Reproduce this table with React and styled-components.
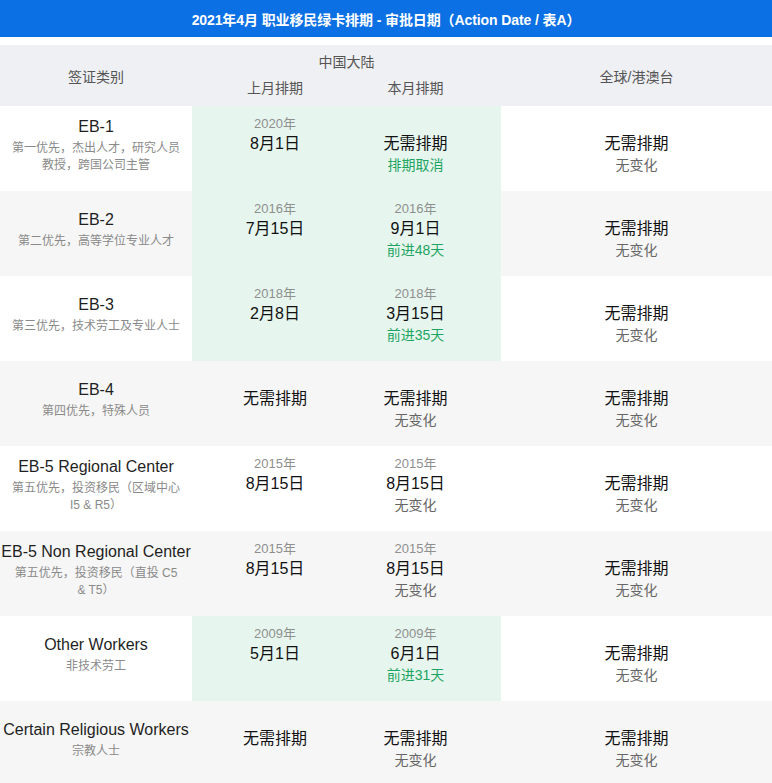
import styled, { createGlobalStyle } from "styled-components";

const GlobalStyle = createGlobalStyle`
  html, body {
    margin: 0;
    padding: 0;
    background: #ffffff;
  }
  body {
    font-family: "Liberation Sans", Arial, "Noto Sans CJK SC", sans-serif;
    color: #1a1a1a;
  }
`;

const COLS = "192px 166px 143px 1fr";

const rows = [
  {
    name: "EB-1",
    desc: "第一优先，杰出人才，研究人员教授，跨国公司主管",
    green: true,
    last: { year: "2020年", main: "8月1日" },
    cur: { main: "无需排期", note: "排期取消", tone: "green" },
  },
  {
    name: "EB-2",
    desc: "第二优先，高等学位专业人才",
    green: true,
    last: { year: "2016年", main: "7月15日" },
    cur: { year: "2016年", main: "9月1日", note: "前进48天", tone: "green" },
  },
  {
    name: "EB-3",
    desc: "第三优先，技术劳工及专业人士",
    green: true,
    last: { year: "2018年", main: "2月8日" },
    cur: { year: "2018年", main: "3月15日", note: "前进35天", tone: "green" },
  },
  {
    name: "EB-4",
    desc: "第四优先，特殊人员",
    last: { main: "无需排期" },
    cur: { main: "无需排期", note: "无变化" },
  },
  {
    name: "EB-5 Regional Center",
    desc: "第五优先，投资移民（区域中心 I5 & R5）",
    last: { year: "2015年", main: "8月15日" },
    cur: { year: "2015年", main: "8月15日", note: "无变化" },
  },
  {
    name: "EB-5 Non Regional Center",
    desc: "第五优先，投资移民（直投 C5 & T5）",
    last: { year: "2015年", main: "8月15日" },
    cur: { year: "2015年", main: "8月15日", note: "无变化" },
  },
  {
    name: "Other Workers",
    desc: "非技术劳工",
    green: true,
    last: { year: "2009年", main: "5月1日" },
    cur: { year: "2009年", main: "6月1日", note: "前进31天", tone: "green" },
  },
  {
    name: "Certain Religious Workers",
    desc: "宗教人士",
    last: { main: "无需排期" },
    cur: { main: "无需排期", note: "无变化" },
  },
];

export default function App() {
  return (
    <>
      <GlobalStyle />
      <Page>
        <TitleBar>2021年4月 职业移民绿卡排期 - 审批日期（Action Date / 表A）</TitleBar>
        <Table>
          <HeadRow>
            <HeadCell>签证类别</HeadCell>
            <GroupHead>
              <GroupLabel>中国大陆</GroupLabel>
              <SubHeads>
                <HeadLabel>上月排期</HeadLabel>
                <HeadLabel $shift>本月排期</HeadLabel>
              </SubHeads>
            </GroupHead>
            <HeadCell>全球/港澳台</HeadCell>
          </HeadRow>
          {rows.map((r, i) => (
            <Row key={r.name} $striped={i % 2 === 1}>
              <NameCell>
                <Name>{r.name}</Name>
                <Desc>{r.desc}</Desc>
              </NameCell>
              <DateCell $green={r.green}>
                <Year>{r.last.year || ""}</Year>
                <Main>{r.last.main}</Main>
              </DateCell>
              <DateCell $green={r.green} $shift>
                <Year>{r.cur.year || ""}</Year>
                <Main>{r.cur.main}</Main>
                <Note $tone={r.cur.tone}>{r.cur.note}</Note>
              </DateCell>
              <DateCell>
                <Year />
                <Main>无需排期</Main>
                <Note>无变化</Note>
              </DateCell>
            </Row>
          ))}
        </Table>
      </Page>
    </>
  );
}

const Page = styled.div`
  width: 100%;
  overflow: hidden;
`;

const TitleBar = styled.div`
  height: 37px;
  background: #0b70e4;
  color: #ffffff;
  font-size: 14px;
  font-weight: 700;
  display: flex;
  align-items: center;
  justify-content: center;
  letter-spacing: -0.1px;
`;

const Table = styled.div`
  margin-top: 8px;
`;

const HeadRow = styled.div`
  display: grid;
  grid-template-columns: ${COLS};
  height: 61px;
  background: #eff0f3;
  color: #555555;
  font-size: 14px;
`;

const HeadCell = styled.div`
  display: flex;
  align-items: center;
  justify-content: center;
`;

const GroupHead = styled.div`
  grid-column: span 2;
  display: flex;
  flex-direction: column;
  padding-top: 7px;
`;

const GroupLabel = styled.div`
  text-align: center;
  line-height: 20px;
`;

const SubHeads = styled.div`
  display: grid;
  grid-template-columns: 166px 143px;
  margin-top: 6px;
`;

const HeadLabel = styled.div`
  text-align: center;
  line-height: 20px;
  padding-right: ${(p) => (p.$shift ? "28px" : "0")};
`;

const Row = styled.div`
  display: grid;
  grid-template-columns: ${COLS};
  height: 85px;
  background: ${(p) => (p.$striped ? "#f6f6f6" : "#ffffff")};
`;

const NameCell = styled.div`
  display: flex;
  flex-direction: column;
  align-items: center;
  justify-content: center;
  padding: 0 10px 8px;
  text-align: center;
  min-width: 0;
`;

const Name = styled.div`
  font-size: 16px;
  line-height: 22px;
  color: #1f1f1f;
  white-space: nowrap;
`;

const Desc = styled.div`
  margin-top: 2px;
  font-size: 12px;
  line-height: 17px;
  color: #8a8a8a;
  width: 172px;
`;

const DateCell = styled.div`
  display: flex;
  flex-direction: column;
  align-items: center;
  padding-top: 8px;
  padding-right: ${(p) => (p.$shift ? "28px" : "0")};
  background: ${(p) => (p.$green ? "#e6f6ee" : "transparent")};
`;

const Year = styled.div`
  height: 20px;
  line-height: 20px;
  font-size: 13px;
  color: #8f8f8f;
`;

const Main = styled.div`
  line-height: 20px;
  font-size: 16px;
  color: #111111;
`;

const Note = styled.div`
  line-height: 22px;
  font-size: 14px;
  color: ${(p) => (p.$tone === "green" ? "#1ea462" : "#666666")};
`;
